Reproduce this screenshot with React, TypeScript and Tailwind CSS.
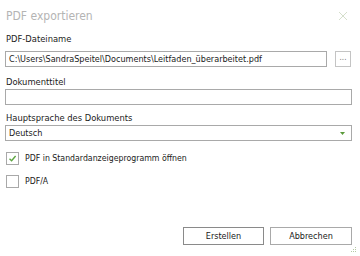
import { useState } from "react";

const font = "font-['DejaVu_Sans_Condensed','Liberation_Sans',sans-serif]";

const Field = ({ value }: { value: string }) => (
  <div className="h-[16px] flex-1 border border-[#a9a9a9] bg-white px-[3px] flex items-center text-[9px] text-[#1a1a1a] leading-none">
    {value}
  </div>
);

const Check = ({ checked, label }: { checked: boolean; label: string }) => (
  <div className="flex items-center gap-[6px] h-[13px]">
    <div className="w-[13px] h-[13px] border border-[#a9a9a9] bg-white flex items-center justify-center">
      {checked && (
        <svg width="9" height="9" viewBox="0 0 9 9">
          <path d="M1.5 4.8 L3.6 6.8 L7.6 2" fill="none" stroke="#5da641" strokeWidth="1.4" />
        </svg>
      )}
    </div>
    <span className="text-[8.7px] text-[#1a1a1a] leading-none">{label}</span>
  </div>
);

export default function App() {
  const [open] = useState(true);

  return (
    <div className={`w-[360px] h-[256px] bg-white relative ${font}`}>
      <div className="flex items-center justify-between pl-[6px] pr-[12px] pt-[6px] h-[26px]">
        <span className="text-[12px] text-[#b4b4b4] leading-none">PDF exportieren</span>
        <svg width="10" height="10" viewBox="0 0 10 10">
          <path d="M1 1 L9 9 M9 1 L1 9" stroke="#d5dfcc" strokeWidth="1" />
        </svg>
      </div>

      <div className="flex flex-col px-[5px] pr-[8px] pt-[7px]">
        <span className="text-[9.3px] text-[#1a1a1a] leading-none pl-[1px] h-[12px] flex items-center">PDF-Dateiname</span>
        <div className="flex items-center gap-[8px] mt-[6px] pr-[1px]">
          <Field value="C:\Users\SandraSpeitel\Documents\Leitfaden_überarbeitet.pdf" />
          <div className="w-[16px] h-[16px] border border-[#c4c4c4] bg-white flex items-center justify-center text-[8px] text-[#777] leading-none pb-[2px]">
            ...
          </div>
        </div>

        <span className="text-[9.3px] text-[#1a1a1a] leading-none pl-[1px] mt-[9px] h-[12px] flex items-center">Dokumenttitel</span>
        <div className="flex mt-[1px]">
          <Field value="" />
        </div>

        <span className="text-[9.3px] text-[#1a1a1a] leading-none pl-[1px] mt-[7px] h-[12px] flex items-center">Hauptsprache des Dokuments</span>
        <div className="flex mt-[1px]">
          <div className="h-[16px] flex-1 border border-[#a9a9a9] bg-white pl-[3px] pr-[6px] flex items-center justify-between text-[9px] text-[#1a1a1a] leading-none">
            <span>Deutsch</span>
            {open && (
              <svg width="5" height="3" viewBox="0 0 5 3">
                <path d="M0 0 L5 0 L2.5 3 Z" fill="#5a9a3a" />
              </svg>
            )}
          </div>
        </div>

        <div className="flex flex-col gap-[10px] mt-[11px] pl-[1px]">
          <Check checked label="PDF in Standardanzeigeprogramm öffnen" />
          <Check checked={false} label="PDF/A" />
        </div>

        <div className="flex justify-end gap-[6px] mt-[39px]">
          <button className="w-[81px] h-[18px] border border-[#8a8a8a] bg-white text-[9px] text-[#1a1a1a] leading-none">
            Erstellen
          </button>
          <button className="w-[82px] h-[18px] border border-[#a9a9a9] bg-white text-[9px] text-[#1a1a1a] leading-none">
            Abbrechen
          </button>
        </div>
      </div>

      <svg className="absolute right-[3px] bottom-[3px]" width="6" height="6" viewBox="0 0 6 6">
        <rect x="4" y="0" width="1" height="1" fill="#b5c9a5" />
        <rect x="2" y="2" width="1" height="1" fill="#b5c9a5" />
        <rect x="4" y="2" width="1" height="1" fill="#b5c9a5" />
        <rect x="0" y="4" width="1" height="1" fill="#b5c9a5" />
        <rect x="2" y="4" width="1" height="1" fill="#b5c9a5" />
        <rect x="4" y="4" width="1" height="1" fill="#b5c9a5" />
      </svg>
    </div>
  );
}
